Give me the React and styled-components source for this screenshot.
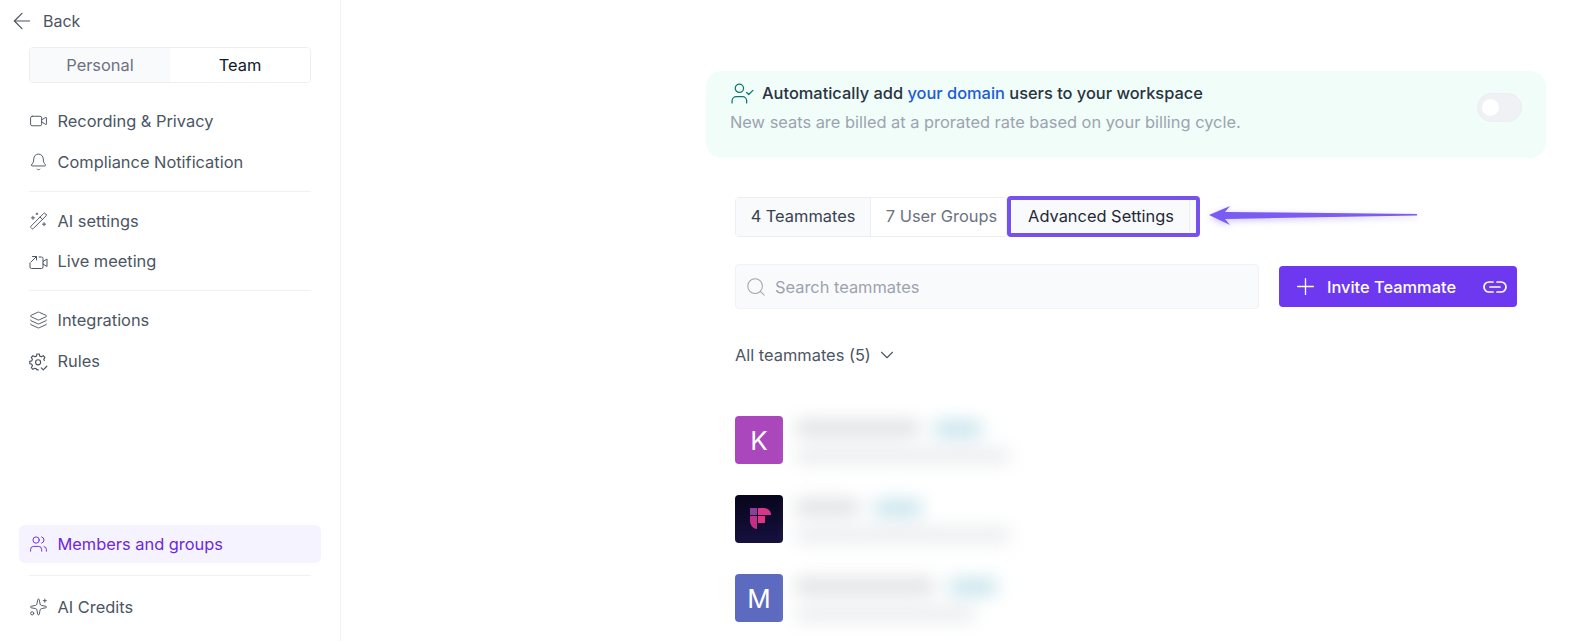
import React from "react";
import styled, { createGlobalStyle } from "styled-components";
import {
  ArrowLeft,
  Bell,
  ChevronDown,
  Layers,
  Plus,
  Search,
  Sparkles,
  UserCheck,
  Users,
  Video,
  WandSparkles,
} from "lucide-react";

const GlobalStyle = createGlobalStyle`
  html, body {
    margin: 0;
    height: 100%;
    background: #fff;
    overflow: hidden;
    font-family: Inter, "Liberation Sans", sans-serif;
  }
  * { box-sizing: border-box; }
`;

const Page = styled.div`
  display: flex;
  height: 641px;
`;

const Sidebar = styled.aside`
  width: 341px;
  flex: none;
  display: flex;
  flex-direction: column;
  padding-bottom: 14px;
  border-right: 1px solid #f0f1f4;
`;

const BackRow = styled.div`
  height: 42px;
  display: flex;
  align-items: center;
  gap: 8px;
  padding-left: 9px;
  color: #4b5563;
  font-size: 16px;
`;

const Segmented = styled.div`
  display: flex;
  height: 36px;
  margin: 5px 29px 18px;
  border: 1px solid #eceef2;
  border-radius: 4px;
  overflow: hidden;
`;

const Segment = styled.div`
  flex: 1;
  display: flex;
  align-items: center;
  justify-content: center;
  font-size: 16.4px;
  color: ${(props) => (props.$active ? "#111827" : "#6b7280")};
  background: ${(props) => (props.$active ? "#fff" : "#f9fafb")};
`;

const NavGroup = styled.div`
  display: flex;
  flex-direction: column;
  gap: ${(props) => props.$gap}px;
`;

const BottomNav = styled.div`
  margin-top: auto;
`;

const NavItem = styled.div`
  height: ${(props) => (props.$active ? "38px" : "40px")};
  display: flex;
  align-items: center;
  gap: 9.5px;
  margin: 0 19px;
  padding-left: 10px;
  border-radius: 6px;
  font-size: 16.4px;
  color: ${(props) => (props.$active ? "#6d28d9" : "#4b5563")};
  background: ${(props) => (props.$active ? "#f5f3ff" : "transparent")};
`;

const IconSlot = styled.span`
  width: 19px;
  height: 19px;
  display: flex;
  align-items: center;
  justify-content: center;
  flex: none;
`;

const Divider = styled.div`
  height: 1px;
  margin: 9px 29px;
  background: #f0f1f4;
`;

const BottomDivider = styled(Divider)`
  margin: 12px 29px 11px;
`;

const Main = styled.main`
  width: 840px;
  margin-left: 365px;
  padding-top: 71px;
  display: flex;
  flex-direction: column;
`;

const Banner = styled.section`
  height: 87px;
  display: flex;
  justify-content: space-between;
  padding: 10px 24px 0 24px;
  border-radius: 16px;
  background: #f0fdf9;
`;

const BannerTitle = styled.div`
  display: flex;
  align-items: center;
  gap: 7px;
  height: 24px;
  font-size: 16.4px;
  font-weight: 500;
  color: #2a3341;
`;

const BannerLink = styled.span`
  color: #1d5bd8;
`;

const BannerNote = styled.div`
  margin-top: 7px;
  font-size: 16.4px;
  color: #9ca3af;
`;

const Switch = styled.div`
  width: 45px;
  height: 29px;
  margin-top: 12px;
  padding: 5px 4px;
  border: 1px solid #eceef1;
  border-radius: 15px;
  background: #f0f1f4;
`;

const SwitchKnob = styled.div`
  width: 17px;
  height: 17px;
  border-radius: 50%;
  background: #fff;
`;

const Content = styled.div`
  padding: 0 29px;
  display: flex;
  flex-direction: column;
`;

const TabRow = styled.div`
  position: relative;
  display: flex;
  align-items: flex-start;
  margin-top: 39px;
`;

const Tabs = styled.div`
  display: flex;
  height: 40px;
  border: 1px solid #eceef2;
  border-radius: 4px;
`;

const Tab = styled.div`
  width: ${(props) => props.$width}px;
  display: flex;
  align-items: center;
  justify-content: center;
  padding: 0 0 2px ${(props) => props.$inset || 0}px;
  font-size: 16.4px;
  color: ${(props) => props.$color};
  background: ${(props) => props.$bg || "#fff"};
  border-right: 1px solid #eceef2;
`;

const HighlightTab = styled.div`
  position: relative;
  z-index: 1;
  width: 193px;
  height: 41px;
  margin: -1px 0 0 -1px;
  padding: 0 5px 2px 0;
  display: flex;
  align-items: center;
  justify-content: center;
  font-size: 16.4px;
  color: #1f2937;
  background: #f9fafb;
  border: 4px solid #7552ee;
  border-radius: 4px;

  &::after {
    content: "";
    position: absolute;
    top: 0;
    bottom: 0;
    right: 6px;
    width: 1px;
    background: #eceef2;
  }
`;

const Pointer = styled.svg`
  position: absolute;
  left: 473px;
  top: 6px;
  filter: drop-shadow(0 2px 3px rgba(117, 82, 238, 0.35));
`;

const SearchRow = styled.div`
  display: flex;
  align-items: center;
  justify-content: space-between;
  margin-top: 27px;
`;

const SearchBox = styled.div`
  width: 524px;
  height: 45px;
  display: flex;
  align-items: center;
  gap: 8px;
  padding-left: 9px;
  border: 1px solid #f1f2f5;
  border-radius: 4px;
  background: #f9fafb;
  font-size: 16.4px;
  color: #9ca3af;
`;

const InviteButton = styled.div`
  width: 238px;
  height: 41px;
  display: flex;
  align-items: center;
  padding: 0 9px 0 13px;
  border-radius: 4px;
  background: #6d38ef;
  color: #fff;
  font-size: 16.4px;
  font-weight: 500;
`;

const InviteLabel = styled.span`
  margin-left: 8px;
  flex: 1;
`;

const FilterRow = styled.div`
  display: flex;
  align-items: center;
  gap: 5px;
  height: 24px;
  margin-top: 34px;
  font-size: 16.4px;
  color: #4b5563;
`;

const Members = styled.div`
  display: flex;
  flex-direction: column;
  gap: 31px;
  margin-top: 49px;
`;

const Member = styled.div`
  display: flex;
  gap: 12px;
  height: 48px;
`;

const Avatar = styled.div`
  width: 48px;
  height: 48px;
  flex: none;
  display: flex;
  align-items: center;
  justify-content: center;
  border-radius: 4px;
  font-size: 26px;
  color: #fff;
  background: ${(props) => props.$bg};
`;

const BlurBlock = styled.div`
  width: 230px;
  display: flex;
  flex-direction: column;
  gap: 12px;
  padding-top: 5px;
  filter: blur(9px);
`;

const BlurLine = styled.div`
  display: flex;
  gap: 14px;
`;

const Smudge = styled.div`
  height: ${(props) => props.$height}px;
  width: ${(props) => props.$width}px;
  border-radius: 5px;
  background: ${(props) => props.$color};
`;

const LiveMeetingIcon = () => (
  <svg width="19" height="19" viewBox="0 0 19 19" fill="none" stroke="#4b5563" strokeWidth="1" strokeLinecap="round" strokeLinejoin="round">
    <path d="M1 11v4a1.5 1.5 0 0 0 1.5 1.5h10a1.5 1.5 0 0 0 1.5-1.5V6.5A1.5 1.5 0 0 0 12.5 5H10" />
    <path d="M14 9.5l4-2.5v7.5L14 12" />
    <path d="M2 10l5.5-5.5M3.5 4.5h4V8" />
  </svg>
);

const RulesIcon = () => (
  <svg width="19" height="19" viewBox="0 0 24 24" fill="none" stroke="#4b5563" strokeWidth="1.5" strokeLinecap="round" strokeLinejoin="round">
    <path d="M10 2.5h3l.6 2.7 2 .9 2.4-1.4 2.1 2.1-1.4 2.4.6 1.6M10 2.5l-.6 2.7-2 .9L5 4.7 2.9 6.8l1.4 2.4-.8 2-2.5.6v3l2.5.6.8 2-1.4 2.4L5 21.9l2.4-1.4 2 .8.4 1.2h2" />
    <circle cx="11.5" cy="13" r="3.2" />
    <path d="M15.5 20l2.5 2.5 4.5-4.5" />
  </svg>
);

const LinkIcon = () => (
  <svg width="26" height="14" viewBox="0 0 26 14" fill="none" stroke="#fff" strokeWidth="1.7" strokeLinecap="round">
    <path d="M11 2H7a5 5 0 0 0 0 10h4" />
    <path d="M15 2h4a5 5 0 0 1 0 10h-4" />
    <path d="M8 7h10" />
  </svg>
);

const BrandLogo = () => (
  <svg width="22" height="22" viewBox="0 0 22 22">
    <rect x="0" y="0" width="7" height="7" fill="#8f3d9b" />
    <path d="M0 8h7v13C3 21 0 17 0 13z" fill="#c22f86" />
    <path d="M8 0h6c4 0 7 3 7 7H8z" fill="#d93589" />
    <rect x="8" y="8" width="7" height="7" fill="#e0347f" />
  </svg>
);

const LogoAvatar = styled(Avatar)`
  padding-left: 4px;
  background: linear-gradient(180deg, #07051c, #16103f);
`;

const navIcon = { size: 20, strokeWidth: 1.2 };

const blurred = [
  { name: 125, badge: 48, note: 215 },
  { name: 65, badge: 48, note: 215 },
  { name: 140, badge: 48, note: 180 },
];

const MemberBlur = ({ row }) => (
  <BlurBlock>
    <BlurLine>
      <Smudge $width={row.name} $height={14} $color="#d9dbdf" />
      <Smudge $width={row.badge} $height={16} $color="#c3e2ea" />
    </BlurLine>
    <Smudge $width={row.note} $height={14} $color="#e8eaee" />
  </BlurBlock>
);

export default function App() {
  return (
    <Page>
      <GlobalStyle />
      <Sidebar>
        <BackRow>
          <ArrowLeft size={26} strokeWidth={1.1} />
          Back
        </BackRow>
        <Segmented>
          <Segment>Personal</Segment>
          <Segment $active>Team</Segment>
        </Segmented>
        <NavGroup $gap={1}>
          <NavItem>
            <IconSlot><Video {...navIcon} /></IconSlot>
            Recording &amp; Privacy
          </NavItem>
          <NavItem>
            <IconSlot><Bell {...navIcon} /></IconSlot>
            Compliance Notification
          </NavItem>
        </NavGroup>
        <Divider />
        <NavGroup $gap={0}>
          <NavItem>
            <IconSlot><WandSparkles {...navIcon} /></IconSlot>
            AI settings
          </NavItem>
          <NavItem>
            <IconSlot><LiveMeetingIcon /></IconSlot>
            Live meeting
          </NavItem>
        </NavGroup>
        <Divider />
        <NavGroup $gap={1}>
          <NavItem>
            <IconSlot><Layers {...navIcon} /></IconSlot>
            Integrations
          </NavItem>
          <NavItem>
            <IconSlot><RulesIcon /></IconSlot>
            Rules
          </NavItem>
        </NavGroup>
        <BottomNav>
          <NavItem $active>
            <IconSlot><Users {...navIcon} /></IconSlot>
            Members and groups
          </NavItem>
          <BottomDivider />
          <NavItem>
            <IconSlot><Sparkles {...navIcon} /></IconSlot>
            AI Credits
          </NavItem>
        </BottomNav>
      </Sidebar>
      <Main>
        <Banner>
          <div>
            <BannerTitle>
              <UserCheck size={25} strokeWidth={1.2} color="#0f766e" />
              <span>
                Automatically add <BannerLink>your domain</BannerLink> users to your workspace
              </span>
            </BannerTitle>
            <BannerNote>New seats are billed at a prorated rate based on your billing cycle.</BannerNote>
          </div>
          <Switch>
            <SwitchKnob />
          </Switch>
        </Banner>
        <Content>
          <TabRow>
            <Tabs>
              <Tab $width={135} $color="#374151" $bg="#f9fafb">4 Teammates</Tab>
              <Tab $width={136} $inset={6} $color="#6b7280">7 User Groups</Tab>
            </Tabs>
            <HighlightTab>Advanced Settings</HighlightTab>
            <Pointer width="212" height="26" viewBox="0 0 212 26">
              <path d="M1 12 L22 3 L17 9 L209 11 L209 12.5 L17 16 L22 22 Z" fill="#7a5cf2" />
            </Pointer>
          </TabRow>
          <SearchRow>
            <SearchBox>
              <Search size={22} strokeWidth={1.1} color="#9ca3af" />
              Search teammates
            </SearchBox>
            <InviteButton>
              <Plus size={27} strokeWidth={1.2} />
              <InviteLabel>Invite Teammate</InviteLabel>
              <LinkIcon />
            </InviteButton>
          </SearchRow>
          <FilterRow>
            All teammates (5)
            <ChevronDown size={22} strokeWidth={1.2} />
          </FilterRow>
          <Members>
            <Member>
              <Avatar $bg="#ab47bc">K</Avatar>
              <MemberBlur row={blurred[0]} />
            </Member>
            <Member>
              <LogoAvatar><BrandLogo /></LogoAvatar>
              <MemberBlur row={blurred[1]} />
            </Member>
            <Member>
              <Avatar $bg="#5c6bc0">M</Avatar>
              <MemberBlur row={blurred[2]} />
            </Member>
          </Members>
        </Content>
      </Main>
    </Page>
  );
}
